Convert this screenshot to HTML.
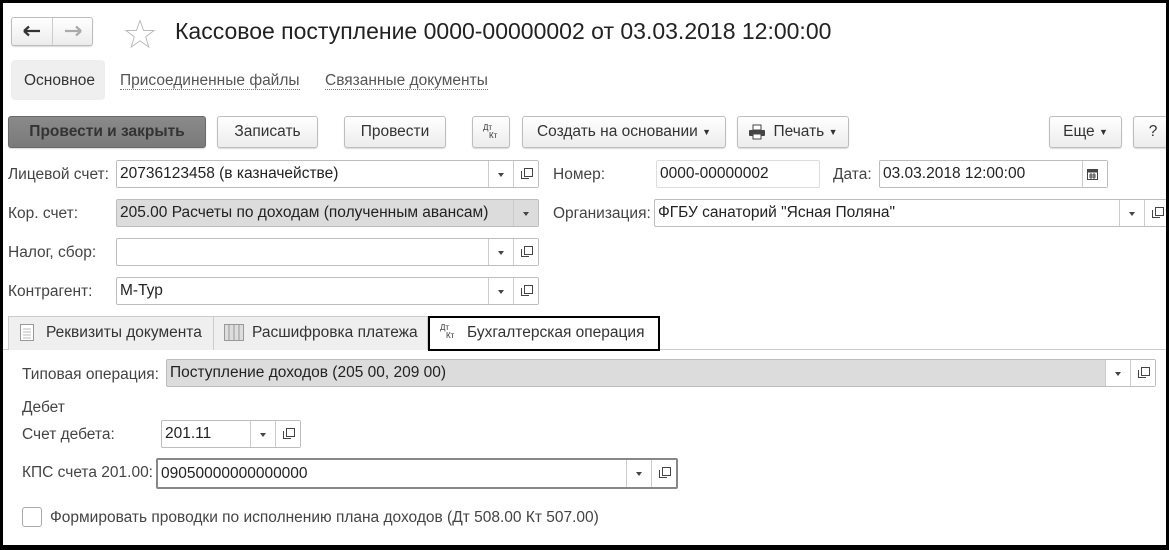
<!DOCTYPE html>
<html><head><meta charset="utf-8"><style>
*{box-sizing:border-box;margin:0;padding:0}
body{width:1169px;height:550px;background:#000;position:relative;overflow:hidden;font-family:"Liberation Sans",sans-serif;font-size:15.5px;color:#333}
#pg{position:absolute;left:3px;top:3px;width:1163px;height:542px;background:#fff;overflow:hidden}
.a{position:absolute}
.btn{position:absolute;border:1px solid #bdbdbd;border-radius:3px;background:linear-gradient(#fff,#ececec);display:flex;align-items:center;justify-content:center;color:#333;font-size:15.5px;box-shadow:0 1px 1px rgba(0,0,0,.15);white-space:nowrap}
.lbl{position:absolute;color:#444;font-size:15.5px;line-height:17px;white-space:nowrap}
.inp{position:absolute;border:1px solid #bdbdbd;border-radius:2px;background:#fff;height:28px;font-size:15.5px;line-height:26px;padding-left:3px;color:#222;white-space:nowrap}
.inp.g{background:#dcdcdc}
.dd{position:absolute;top:0;bottom:0;width:25px;border-left:1px solid #ccc;background:#fff}
.dd:after{content:"";position:absolute;left:9px;top:12px;border-left:3.5px solid transparent;border-right:3.5px solid transparent;border-top:4px solid #444}
.cp{position:absolute;top:0;bottom:0;width:25px;border-left:1px solid #ccc;background:#fff}
.cp:before{content:"";position:absolute;left:10px;top:7px;width:7px;height:7px;border:1px solid #444;background:#fff;z-index:1}
.cp:after{content:"";position:absolute;left:7px;top:10px;width:7px;height:7px;border-left:1px solid #444;border-bottom:1px solid #444}
.dk{font-size:8px;line-height:9px;color:#333;position:relative;width:16px;height:18px}
.dk span{position:absolute}
</style></head><body><div id="pg">
<div class="btn" style="left:8px;top:14px;width:82px;height:29px"></div>
<div class="a" style="left:49px;top:15px;width:1px;height:27px;background:#ccc"></div>
<svg class="a" style="left:20px;top:22px" width="20" height="12"><path d="M1 6H17M1 6L6 1.5M1 6L6 10.5" stroke="#333" stroke-width="2.2" fill="none"/></svg>
<svg class="a" style="left:61px;top:22px" width="20" height="12"><path d="M1 6H17M17 6L12 1.5M17 6L12 10.5" stroke="#aaa" stroke-width="2.2" fill="none"/></svg>
<svg class="a" style="left:121px;top:16px" width="32" height="30"><path d="M16 1.5L19.6 11.5H30L21.7 17.8L24.8 28L16 21.8L7.2 28L10.3 17.8L2 11.5H12.4Z" fill="none" stroke="#bbb" stroke-width="1"/></svg>
<div class="a" style="left:172px;top:15px;font-size:23px;color:#222;white-space:nowrap">Кассовое поступление 0000-00000002 от 03.03.2018 12:00:00</div>
<div class="a" style="left:8px;top:57px;width:94px;height:40px;background:#efefef;border-radius:4px"></div>
<div class="lbl" style="left:21px;top:69px;color:#333">Основное</div>
<div class="lbl" style="left:117px;top:69px;color:#555;border-bottom:1px dotted #777">Присоединенные файлы</div>
<div class="lbl" style="left:322px;top:69px;color:#555;border-bottom:1px dotted #777">Связанные документы</div>
<div class="btn" style="left:5px;top:113px;width:198px;height:32px;background:linear-gradient(#8a8a8a,#7a7a7a);border-color:#6a6a6a;color:#333;font-weight:bold">Провести и закрыть</div>
<div class="btn" style="left:214px;top:113px;width:101px;height:32px">Записать</div>
<div class="btn" style="left:341px;top:113px;width:102px;height:32px">Провести</div>
<div class="btn" style="left:469px;top:113px;width:38px;height:32px"><div class="dk"><span style="left:0;top:0">Дт</span><span style="left:6px;top:8px">Кт</span></div></div>
<div class="btn" style="left:519px;top:113px;width:204px;height:32px">Создать на основании&nbsp;<span style="font-size:9px">▼</span></div>
<div class="btn" style="left:734px;top:113px;width:112px;height:32px"><svg width="18" height="16" style="margin-right:7px"><rect x="5" y="1" width="8" height="5" fill="#fff" stroke="#444"/><rect x="1" y="6" width="16" height="6" rx="1" fill="#444"/><rect x="5" y="10" width="8" height="5" fill="#fff" stroke="#444"/></svg>Печать&nbsp;<span style="font-size:9px">▼</span></div>
<div class="btn" style="left:1046px;top:113px;width:73px;height:32px">Еще&nbsp;<span style="font-size:9px">▼</span></div>
<div class="btn" style="left:1130px;top:113px;width:40px;height:32px">?</div>
<div class="lbl" style="left:5px;top:163px">Лицевой счет:</div>
<div class="inp" style="left:113px;top:157px;width:423px">20736123458 (в казначействе)<div class="dd" style="right:25px"></div><div class="cp" style="right:0"></div></div>
<div class="lbl" style="left:550px;top:163px">Номер:</div>
<div class="inp" style="left:653px;top:157px;width:164px;border-color:#ddd">0000-00000002</div>
<div class="lbl" style="left:830px;top:163px">Дата:</div>
<div class="inp" style="left:876px;top:157px;width:229px">03.03.2018 12:00:00<div class="a" style="right:0;top:0;bottom:0;width:25px;border-left:1px solid #ccc;background:#fff"></div></div>
<svg class="a" style="left:1084px;top:165px" width="11" height="12"><rect x="0.5" y="1.5" width="10" height="10" fill="#fff" stroke="#444"/><rect x="0.5" y="1.5" width="10" height="3" fill="#444"/><path d="M2 7h7M2 9h7M4 5v6M7 5v6" stroke="#444"/></svg>
<div class="lbl" style="left:5px;top:202px">Кор. счет:</div>
<div class="inp g" style="left:113px;top:196px;width:423px">205.00 Расчеты по доходам (полученным авансам)<div class="dd" style="right:0;width:25px;background:#dcdcdc"></div></div>
<div class="lbl" style="left:550px;top:202px">Организация:</div>
<div class="inp" style="left:651px;top:196px;width:520px">ФГБУ санаторий "Ясная Поляна"<div class="dd" style="right:29px"></div><div class="cp" style="right:4px"></div></div>
<div class="lbl" style="left:5px;top:241px">Налог, сбор:</div>
<div class="inp" style="left:113px;top:235px;width:423px"><div class="dd" style="right:25px"></div><div class="cp" style="right:0"></div></div>
<div class="lbl" style="left:5px;top:280px">Контрагент:</div>
<div class="inp" style="left:113px;top:274px;width:423px">М-Тур<div class="dd" style="right:25px"></div><div class="cp" style="right:0"></div></div>
<div class="a" style="left:0;top:346px;width:1163px;height:1px;background:#ccc"></div>
<div class="a" style="left:5px;top:313px;width:206px;height:34px;background:#efefef;border:1px solid #ccc;border-bottom:none"></div>
<div class="a" style="left:211px;top:313px;width:214px;height:34px;background:#efefef;border:1px solid #ccc;border-left:none;border-bottom:none"></div>
<svg class="a" style="left:17px;top:321px" width="14" height="18"><rect x="0.5" y="0.5" width="13" height="16" fill="#fff" stroke="#999"/><path d="M3 5h8M3 8h8M3 11h8M3 14h8" stroke="#bbb"/></svg>
<div class="lbl" style="left:43px;top:321px;color:#333">Реквизиты документа</div>
<svg class="a" style="left:221px;top:321px" width="20" height="18"><rect x="0.5" y="0.5" width="19" height="16" fill="#ddd" stroke="#999"/><path d="M5 1v16M10 1v16M15 1v16" stroke="#999"/></svg>
<div class="lbl" style="left:249px;top:321px;color:#333">Расшифровка платежа</div>
<div class="a" style="left:425px;top:313px;width:232px;height:35px;border:2px solid #000;background:#fff"></div>
<div class="a dk" style="left:437px;top:320px"><span style="left:0;top:0">Дт</span><span style="left:6px;top:8px">Кт</span></div>
<div class="lbl" style="left:464px;top:321px;color:#333">Бухгалтерская операция</div>
<div class="lbl" style="left:19px;top:363px">Типовая операция:</div>
<div class="inp g" style="left:163px;top:356px;width:990px">Поступление доходов (205 00, 209 00)<div class="dd" style="right:25px"></div><div class="cp" style="right:0"></div></div>
<div class="lbl" style="left:19px;top:396px">Дебет</div>
<div class="lbl" style="left:19px;top:423px">Счет дебета:</div>
<div class="inp" style="left:158px;top:417px;width:140px">201.11<div class="dd" style="right:25px"></div><div class="cp" style="right:0"></div></div>
<div class="lbl" style="left:19px;top:461px">КПС счета 201.00:</div>
<div class="inp" style="left:153px;top:455px;width:522px;height:31px;border:2px solid #888;line-height:27px">09050000000000000<div class="dd" style="right:25px"></div><div class="cp" style="right:0"></div></div>
<div class="a" style="left:19px;top:504px;width:20px;height:20px;border:1px solid #aaa;border-radius:3px;background:#fff"></div>
<div class="lbl" style="left:47px;top:506px;color:#444">Формировать проводки по исполнению плана доходов (Дт 508.00 Кт 507.00)</div>
</div></body></html>
